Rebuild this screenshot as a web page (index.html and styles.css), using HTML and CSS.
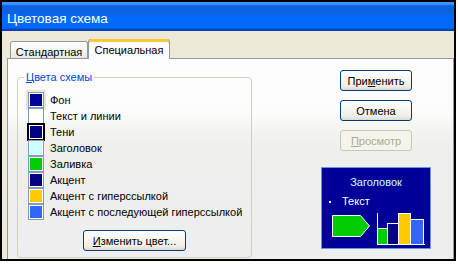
FILE: index.html
```html
<!DOCTYPE html>
<html lang="ru">
<head>
<meta charset="utf-8">
<title>Цветовая схема</title>
<link rel="stylesheet" href="styles.css">
</head>
<body>
<div class="window">
  <div class="titlebar">Цветовая схема</div>
  <div class="client">
    <div class="tabs">
      <div class="tab">Стандартная</div>
      <div class="tab active">Специальная</div>
    </div>
    <div class="panel">
      <fieldset class="group">
        <legend class="group-title"><u>Ц</u>вета схемы</legend>
        <ul class="colors">
          <li class="row"><span class="sw hover"><i class="c-bg"></i></span>Фон</li>
          <li class="row"><span class="sw"><i class="c-text"></i></span>Текст и линии</li>
          <li class="row"><span class="sw sel"><i class="c-shadow"></i></span>Тени</li>
          <li class="row"><span class="sw"><i class="c-title"></i></span>Заголовок</li>
          <li class="row"><span class="sw"><i class="c-fill"></i></span>Заливка</li>
          <li class="row"><span class="sw"><i class="c-accent"></i></span>Акцент</li>
          <li class="row"><span class="sw"><i class="c-link"></i></span>Акцент с гиперссылкой</li>
          <li class="row"><span class="sw"><i class="c-visited"></i></span>Акцент с последующей гиперссылкой</li>
        </ul>
        <div class="change">
          <button class="btn btn-wide"><u>И</u>зменить цвет...</button>
        </div>
      </fieldset>
      <div class="side">
        <div class="buttons">
          <button class="btn">При<u>м</u>енить</button>
          <button class="btn">Отмена</button>
          <button class="btn" disabled><u>П</u>росмотр</button>
        </div>
        <div class="preview">
          <svg class="preview-art" width="108" height="80" viewBox="0 0 108 80">
            <text class="pv-title" x="54" y="18" text-anchor="middle">Заголовок</text>
            <rect x="7" y="33" width="2" height="2" fill="#ffffff"/>
            <text class="pv-text" x="20" y="37">Текст</text>
            <polygon points="10.5,47.5 38.5,47.5 47.5,58 38.5,68.5 10.5,68.5" fill="#00cc00" stroke="#ffffff" stroke-width="1"/>
            <rect x="55.5" y="60.5" width="10" height="16" fill="#00cc00" stroke="#ffffff"/>
            <rect x="65.5" y="55.5" width="11" height="21" fill="#000080" stroke="#ffffff"/>
            <rect x="76.5" y="45.5" width="12" height="31" fill="#ffcc00" stroke="#ffffff"/>
            <rect x="88.5" y="51.5" width="13" height="25" fill="#3366ff" stroke="#ffffff"/>
            <line x1="55.5" y1="45" x2="55.5" y2="77" stroke="#ffffff"/>
            <line x1="55" y1="76.5" x2="103" y2="76.5" stroke="#ffffff"/>
          </svg>
        </div>
      </div>
    </div>
  </div>
</div>
</body>
</html>
```
FILE: styles.css
```css
html, body {
  margin: 0;
  padding: 0;
  background: #ffffff;
}
body {
  font-family: "Liberation Sans", Arial, sans-serif;
  font-size: 11px;
  color: #000000;
}
.window {
  box-sizing: border-box;
  width: 456px;
  height: 261px;
  border: 2px solid #000000;
  background: #ece9d8;
  display: flex;
  flex-direction: column;
  overflow: hidden;
}
.titlebar {
  flex: none;
  height: 29px;
  box-sizing: border-box;
  padding: 8px 0 0 5px;
  color: #ffffff;
  font-size: 13.5px;
  line-height: 18px;
  background: linear-gradient(to bottom,
    #3d95ff 0px, #3d95ff 2px,
    #0b62e0 4px, #0a64e6 12px,
    #006afe 15px, #0068fc 26px,
    #0048cc 27px, #003ca8 29px);
}
.client {
  flex: 1;
  display: flex;
  flex-direction: column;
  padding: 8px 0 0 5px;
  min-height: 0;
}
.tabs {
  flex: none;
  display: flex;
  align-items: flex-end;
  height: 20px;
  margin: 0 0 -1px 3px;
  position: relative;
  z-index: 1;
}
.tab {
  box-sizing: border-box;
  height: 17px;
  width: 78px;
  margin-bottom: 1px;
  border: 1px solid #919b9c;
  border-bottom: none;
  border-radius: 3px 3px 0 0;
  background: linear-gradient(to bottom, #ffffff, #f3f3ef 60%, #e6e5df);
  display: flex;
  align-items: center;
  justify-content: center;
  padding-top: 3px;
  white-space: nowrap;
}
.tab.active {
  height: 20px;
  width: 82px;
  margin-bottom: 0;
  border-top: none;
  border-radius: 3px 3px 0 0;
  background: #fcfcfe;
  box-shadow: inset 0 3px 0 #ffc83c, inset 0 1px 0 #e68b2c;
  padding-top: 1px;
}
.panel {
  flex: 1;
  display: flex;
  align-items: flex-start;
  border: 1px solid #919b9c;
  border-bottom: none;
  background: linear-gradient(to bottom, #fdfdfe 0%, #fcfcfc 27%, #f3f3f0 36%, #efefee 45%, #eeeeee 100%);
  min-height: 0;
}
.group {
  box-sizing: border-box;
  width: 235px;
  height: 188px;
  margin: 11px 0 0 9px;
  padding: 8px 0 0 10px;
  border: 1px solid #d0d0bf;
  border-radius: 4px;
  min-width: 0;
}
.group-title {
  padding: 0 2px;
  margin-left: -4px;
  color: #0046d5;
  line-height: 14px;
}
.colors {
  list-style: none;
  margin: 0;
  padding: 0;
}
.row {
  display: flex;
  align-items: center;
  height: 16px;
  white-space: nowrap;
}
.sw {
  box-sizing: border-box;
  flex: none;
  width: 16px;
  height: 16px;
  margin-right: 6px;
  border: 1px solid #7f9db9;
  padding: 1px;
  background: #ffffff;
  display: flex;
}
.sw i {
  flex: 1;
  display: block;
}
.sw.hover {
  box-shadow: 0 0 0 2px #e6e4d6;
}
.sw.sel {
  border-color: #000000;
  box-shadow: 0 0 0 1px #000000;
}
.c-bg { background: #000099; }
.c-text { background: #ffffff; }
.c-shadow { background: #000080; }
.c-title { background: #ccffff; }
.c-fill { background: #00cc00; }
.c-accent { background: #000080; }
.c-link { background: #ffcc00; }
.c-visited { background: #3366ff; }
.change {
  display: flex;
  justify-content: center;
  margin: 10px 0 0 -10px;
}
.btn {
  box-sizing: border-box;
  width: 72px;
  height: 21px;
  padding: 0;
  border: 1px solid #003c74;
  border-radius: 3px;
  background: linear-gradient(to bottom, #ffffff 0%, #f7f7f4 40%, #efeee8 80%, #dcd9cf 100%);
  font-family: "Liberation Sans", Arial, sans-serif;
  font-size: 11px;
  color: #000000;
  white-space: nowrap;
}
.btn-wide {
  width: 103px;
}
.btn:disabled {
  border-color: #c9c7ba;
  background: #f5f4ea;
  color: #aca899;
}
.side {
  width: 110px;
  margin: 11px 0 0 69px;
  display: flex;
  flex-direction: column;
  align-items: center;
}
.buttons {
  display: flex;
  flex-direction: column;
  gap: 9px;
}
.preview {
  margin-top: 16px;
  width: 110px;
  height: 82px;
  box-sizing: border-box;
  border: 1px solid #6a98d6;
  background: #000099;
}
.preview-art {
  display: block;
}
.pv-title {
  fill: #ccffff;
  font-family: "Liberation Sans", Arial, sans-serif;
  font-size: 11px;
}
.pv-text {
  fill: #ffffff;
  font-family: "Liberation Sans", Arial, sans-serif;
  font-size: 11px;
}
```
